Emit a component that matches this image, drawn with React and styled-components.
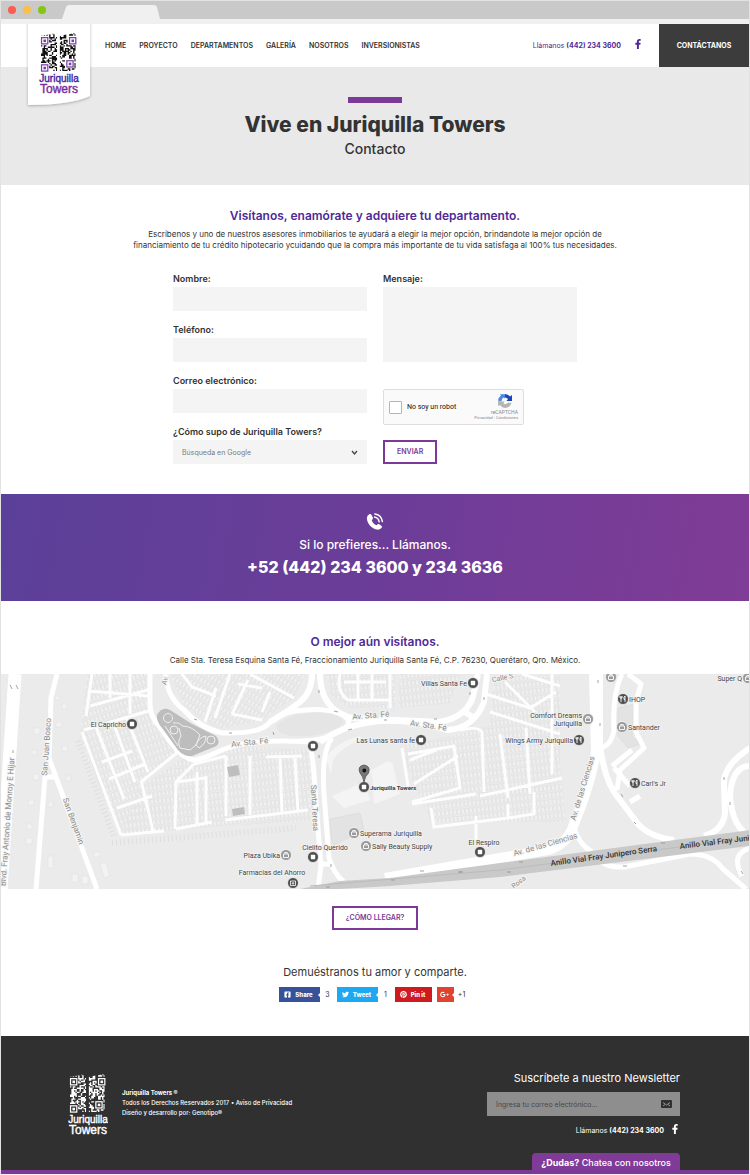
import React from "react";
import styled, { createGlobalStyle } from "styled-components";
import { FaFacebookF, FaTwitter, FaPinterest, FaFacebookSquare, FaGooglePlusG } from "react-icons/fa";

const sans = `Inter, "Open Sans", sans-serif`;
const purple = "#4f2a96";
const violet = "#7b3a97";

const GlobalStyle = createGlobalStyle`
  *, *::before, *::after { box-sizing: border-box; }
  body { margin: 0; background: #fff; font-family: ${sans}; color: #333; }
  h1, h2, p { margin: 0; }
  a { color: inherit; text-decoration: none; }
  button, input, select, textarea { font-family: inherit; margin: 0; border-radius: 0; }
`;

const Browser = styled.div`
  border: 1px solid #e2e2e2;
  border-bottom-color: #f5eef8;
`;

const TitleBar = styled.div`
  display: flex;
  align-items: flex-end;
  height: 18px;
  background: #c9c9c9;
`;

const Lights = styled.div`
  display: flex;
  align-self: center;
  gap: 7px;
  padding: 0 16px 0 7px;
`;

const Light = styled.span`
  width: 8px;
  height: 8px;
  border-radius: 50%;
  background: ${(p) => p.$color};
`;

const Tab = styled.svg`
  display: block;
  width: 100px;
  height: 14px;
`;

const ToolStrip = styled.div`
  height: 5px;
  background: #f0f0f0;
`;

const Header = styled.header`
  position: relative;
  display: flex;
  align-items: stretch;
  height: 43px;
  padding-left: 104px;
  background: #fff;
  font-size: 7px;
  line-height: 10px;
`;

const LogoCard = styled.a`
  position: absolute;
  top: 0;
  left: 24px;
  z-index: 1;
  svg { display: block; }
`;

const Nav = styled.nav`
  display: flex;
  align-items: center;
  gap: 13px;
  font-weight: 600;
`;

const Phone = styled.div`
  display: flex;
  align-items: center;
  gap: 12px;
  margin-left: auto;
  color: ${purple};
  b { font-weight: 700; }
`;

const ContactLink = styled.a`
  display: flex;
  align-items: center;
  justify-content: center;
  width: 90px;
  margin-left: 16px;
  background: #3c3c3c;
  color: #fff;
  font-weight: 700;
`;

const Hero = styled.section`
  display: flex;
  flex-direction: column;
  align-items: center;
  height: 118px;
  padding-top: 30px;
  background: #e9e9e9;
  &::before {
    content: "";
    width: 54px;
    height: 6px;
    background: ${violet};
  }
  h1 { margin-top: 9px; font-size: 21px; line-height: 26px; font-weight: 800; }
  p { margin-top: 1px; font-size: 14px; line-height: 20px; font-weight: 500; }
`;

const Intro = styled.section`
  padding: 22px 16px 0;
  text-align: center;
`;

const Heading = styled.h2`
  color: ${purple};
  font-size: 12px;
  line-height: 18px;
  font-weight: 600;
`;

const Copy = styled.p`
  max-width: 540px;
  margin: 4px auto 0;
  font-size: 8px;
  line-height: 11px;
`;

const Form = styled.form`
  display: grid;
  grid-template-columns: 1fr 1fr;
  column-gap: 16px;
  width: 100%;
  max-width: 404px;
  margin: 21px auto 30px;
`;

const Column = styled.div`
  display: flex;
  flex-direction: column;
  align-items: ${(p) => p.$align || "stretch"};
`;

const Field = styled.label`
  display: flex;
  flex-direction: column;
  align-self: stretch;
  gap: 2px;
  margin-bottom: ${(p) => (p.$last ? 0 : 12)}px;
  font-size: 9px;
  line-height: 13px;
  font-weight: 600;
`;

const TextInput = styled.input`
  width: 100%;
  height: 24px;
  padding: 0 9px;
  border: 0;
  background: #f4f4f4;
  font-size: 8px;
`;

const Message = styled.textarea`
  width: 100%;
  height: 75px;
  padding: 9px;
  border: 0;
  resize: none;
  background: #f4f4f4;
  font-size: 8px;
`;

const SelectBox = styled.span`
  position: relative;
  display: block;
  svg { position: absolute; right: 9px; top: 9px; pointer-events: none; }
`;

const Select = styled.select`
  display: block;
  width: 100%;
  height: 24px;
  padding: 0 24px 0 9px;
  border: 0;
  appearance: none;
  background: #f4f4f4;
  color: #7b7b7b;
  font-size: 7px;
`;

const Captcha = styled.div`
  display: flex;
  align-items: center;
  width: 141px;
  height: 36px;
  margin: 15px 0;
  padding: 0 5px;
  border: 1px solid #dedede;
  border-radius: 2px;
  background: #fafafa;
  font-family: Roboto, sans-serif;
  label { display: flex; align-items: center; gap: 5px; font-size: 7px; color: #111; }
  input {
    appearance: none;
    width: 13px;
    height: 13px;
    border: 1px solid #b5b5b5;
    border-radius: 1px;
    background: #fff;
  }
`;

const CaptchaMark = styled.div`
  display: flex;
  flex-direction: column;
  align-items: flex-end;
  margin-left: auto;
  color: #888;
  font-size: 4px;
  line-height: 6px;
  svg { margin-right: 5px; }
  span { font-size: 5px; }
`;

const OutlineButton = styled.button`
  height: 24px;
  padding: 0 12px;
  border: 2px solid ${violet};
  background: #fff;
  color: ${violet};
  font-size: 7px;
  line-height: 10px;
  font-weight: 600;
`;

const CallBand = styled.section`
  display: flex;
  flex-direction: column;
  align-items: center;
  height: 107px;
  padding-top: 18px;
  background: linear-gradient(100deg, #5b4099 0%, #6b3d98 50%, #803c96 100%);
  color: #fff;
  p { margin-top: 4px; font-size: 12px; line-height: 18px; font-weight: 500; }
  a { margin-top: 2px; font-size: 16px; line-height: 22px; font-weight: 800; }
`;

const Visit = styled.section`
  padding-top: 32px;
  text-align: center;
  ${Copy} { max-width: none; margin: 4px 0 8px; }
`;

const MapView = styled.svg`
  display: block;
  width: 100%;
  height: 215px;
  background: #ebebeb;
  font-family: Roboto, sans-serif;
`;

const Share = styled.section`
  display: flex;
  flex-direction: column;
  align-items: center;
  padding: 17px 0 34px;
  > p { margin: 33px 0 6px; font-size: 11px; line-height: 18px; }
`;

const ShareRow = styled.div`
  display: flex;
`;

const ShareItem = styled.div`
  display: flex;
  align-items: center;
  height: 15px;
  margin-right: ${(p) => p.$gap || 0}px;
  font-size: 7px;
  span { width: 17px; padding-right: 2px; text-align: center; }
`;

const ShareButton = styled.button`
  position: relative;
  display: flex;
  align-items: center;
  justify-content: center;
  gap: 4px;
  width: ${(p) => p.$width}px;
  height: 15px;
  padding: 0 2px 0 0;
  border: 0;
  background: ${(p) => p.$color};
  color: #fff;
  font-size: 6px;
  line-height: 8px;
  font-weight: 800;
  &::after {
    content: "";
    display: ${(p) => (p.$notch ? "block" : "none")};
    position: absolute;
    right: 0;
    top: 6px;
    border: 2px solid transparent;
    border-right-color: #fff;
    border-left: 0;
  }
`;

const Footer = styled.footer`
  position: relative;
  display: flex;
  align-items: flex-start;
  height: 138px;
  padding: 38px 69px 0 67px;
  border-bottom: 4px solid ${violet};
  background: #303030;
  color: #fff;
`;

const Legal = styled.div`
  margin: 14px 0 0 14px;
  font-size: 6px;
  line-height: 10px;
  p { font-weight: 500; }
  b { font-weight: 700; }
`;

const Newsletter = styled.form`
  display: flex;
  flex-direction: column;
  align-items: flex-end;
  width: 193px;
  margin: -5px 0 0 auto;
  > label { margin-bottom: 5px; font-size: 11px; line-height: 18px; }
`;

const EmailBox = styled.div`
  display: flex;
  align-items: center;
  width: 100%;
  height: 24px;
  padding: 0 8px 0 9px;
  background: #8e8e8e;
  input {
    flex: 1;
    min-width: 0;
    padding: 0;
    border: 0;
    background: none;
    color: #fff;
    font-size: 7px;
    &::placeholder { color: #484848; opacity: 1; }
  }
  button { padding: 0; border: 0; background: none; line-height: 0; }
`;

const FooterPhone = styled.div`
  display: flex;
  align-items: center;
  gap: 6px;
  margin-top: 8px;
  font-size: 7px;
  line-height: 10px;
`;

const ChatTab = styled.button`
  position: absolute;
  right: 69px;
  bottom: 0;
  width: 148px;
  height: 17px;
  padding: 0;
  border: 0;
  border-radius: 4px 4px 0 0;
  background: #803b98;
  color: #fff;
  font-size: 9px;
  line-height: 19px;
  font-weight: 500;
`;

function codeModules(cols, rows, seed, finders) {
  const cells = [];
  let s = seed;
  for (let y = 0; y < rows; y++) {
    for (let x = 0; x < cols; x++) {
      s = (s * 16807) % 2147483647;
      const blocked = finders.some(([fx, fy]) => x >= fx - 1 && x <= fx + 5 && y >= fy - 1 && y <= fy + 5);
      if (!blocked && (s >> 8) % 100 < 54) cells.push(`M${x} ${y}h1v1h-1z`);
    }
  }
  return cells.join("");
}

const leftFinders = [[0, 3], [0, 23]];
const rightFinders = [[7, 3], [5, 20]];
const leftCells = codeModules(12, 28, 7151, leftFinders);
const rightCells = codeModules(12, 28, 91377, rightFinders);

function Half({ x, cells, finders, ink, accent, paper, id }) {
  return (
    <g transform={`translate(${x} 0) scale(1.36)`}>
      <clipPath id={id}>
        <path d="M0 2L12 0V28H0z" />
      </clipPath>
      <path d={cells} fill={ink} clipPath={`url(#${id})`} />
      {finders.map(([fx, fy]) => (
        <g key={`${fx}-${fy}`}>
          <rect x={fx + 0.4} y={fy + 0.4} width="4.6" height="4.6" fill={paper} stroke={accent} strokeWidth="0.9" />
          <rect x={fx + 1.8} y={fy + 1.8} width="1.9" height="1.9" fill={accent} />
        </g>
      ))}
    </g>
  );
}

function LogoMark({ ink, accent, paper, text, text2, id }) {
  return (
    <g>
      <g transform="translate(2 0)">
        <Half x={0} cells={leftCells} finders={leftFinders} ink={ink} accent={accent} paper={paper} id={`${id}-left`} />
        <Half x={18.5} cells={rightCells} finders={rightFinders} ink={ink} accent={accent} paper={paper} id={`${id}-right`} />
      </g>
      <g fontFamily="Liberation Sans, sans-serif" textAnchor="middle" strokeWidth="0.4">
        <text x="20" y="49" fontSize="10" fill={text} stroke={text}>Juriquilla</text>
        <text x="20" y="60" fontSize="12" fill={text2} stroke={text2}>Towers</text>
      </g>
    </g>
  );
}

const places = [
  ["El Capricho", 132, 50, "end"],
  ["Villas Santa Fe", 473, 9, "end"],
  ["Las Lunas santa fe", 421, 66, "end"],
  ["", 313, 72, "end"],
  ["Juriquilla Towers", 364, 113, "start", "bold"],
  ["Superama Juriquilla", 354, 159, "start", "shop"],
  ["Sally Beauty Supply", 366, 172, "start", "shop"],
  ["Plaza Ubika", 286, 181, "end", "shop"],
  ["Wings Army Juriquilla", 579, 66, "end", "food"],
  ["IHOP", 623, 25, "start", "food"],
  ["Santander", 622, 53, "start", "shop"],
  ["Carl's Jr", 635, 109, "start", "food"],
  ["Super Q", 748, 4, "end", "shop"],
  ["", 611, 3, "end", "shop"],
  ["", 588, 45, "end", "shop"],
  ["", 313, 183, "end"],
  ["", 293, 209, "end", "cross"],
  ["", 480, 178, "end"],
];

const placeCaptions = [
  ["Comfort Dreams", 582, 44, "end"],
  ["Juriquilla", 582, 52, "end"],
  ["Cielito Querido", 325, 176, "middle"],
  ["Farmacias del Ahorro", 272, 201, "middle"],
  ["El Respiro", 484, 171, "middle"],
];

const streets = [
  ["Av. Sta. Fé", 371, 44, -5, 8],
  ["Av. Sta. Fé", 428, 54, 8, 8],
  ["Av. Sta. Fé", 250, 71, -6, 8],
  ["Av. S", 168, 4, -75, 7],
  ["San Juan Bosco", 49, 73, -86, 8],
  ["San Benjamin", 71, 148, 70, 8],
  ["Blvd. Fray Antonio de Monroy E Hijar", 10, 148, -86, 8],
  ["Santa Teresa", 312, 134, 87, 8],
  ["Av. de las Ciencias", 585, 115, -73, 8],
  ["Av. de las Ciencias", 546, 173, -16, 8],
  ["Rosa", 520, 210, -38, 7],
  ["Calle S", 503, 6, -12, 7],
];

const blocks = [
  ["M87 0H146L149 32 178 76 141 106 154 136 117 158 80 64z", "a"],
  ["M142 112L180 86 218 76 236 72 312 76 313 146 160 157 118 163z", "b"],
  ["M170 0H306L292 26 262 46 218 55 184 32z", "c"],
  ["M326 0H395V34H350L332 22z", "b"],
  ["M400 0H460L450 30 398 34z", "b"],
  ["M494 2H560V90L566 148 430 148 402 80 404 72 460 60 490 50z", "b"],
];

const lanes = [
  "M92 0L86 42M90 32L148 16M88 17L149 22M110 0V24M130 0V40M84 56L152 36M82 58L121 161M96 53L124 125M113 48L135 108M127 45L148 98M102 88L132 77M109 105L145 90M117 134L152 122M141 108L178 78M141 106L153 157M121 161L164 157M176 155L212 148M225 146L308 136",
  "M175 155L176 108L194 90M176 108L206 104M197 98V152M206 102V150M194 90L226 82M226 82V142M250 82V141M266 83L302 82M280 82L282 140M295 84L298 138",
  "M182 0L192 13 216 22M216 14L205 48M230 0L215 44M232 40L248 6M232 40L262 46M250 0L294 24M270 18L262 38M238 10L262 14M340 0Q336 18 348 26H390M344 8H386M358 0V26M372 0V26M390 0V34",
  "M402 74L408 112M408 80L454 72 460 114 412 128M410 86L436 76M414 110L458 82M460 56Q478 52 482 58L484 118M490 38L560 60M486 20L530 34 556 18M505 8L535 38M522 0L560 12M552 0V100M500 60L508 124M526 54L530 120M480 122L562 104M412 130L476 120M431 134L434 153 508 144 534 140V118M476 142V166M508 130V144",
];

const roads = [
  ["M15 0L1 215", 13],
  ["M57 0L51 24 49 84 97 215M55 103H45L36 215", 5],
  ["M150 0V30Q150 40 156 48L172 70Q182 84 194 86Q206 84 222 76Q250 64 310 68", 5],
  ["M166 0Q166 22 184 36Q200 54 222 59Q262 60 270 48Q285 36 306 36Q330 34 344 42Q356 50 338 58Q324 67 300 67", 5],
  ["M312 0Q312 18 300 28Q290 36 270 48M320 0Q320 24 335 36Q344 42 352 44L440 48Q470 42 474 18L478 0", 6],
  ["M320 68Q345 50 380 47Q410 45 448 56Q474 54 484 28L487 0M462 36L474 44", 6],
  ["M310 69Q314 90 316 130L321 192 318 215M332 64Q321 78 324 120L329 184Q334 200 344 208M321 190H330", 5],
  ["M594 0L596 78Q590 112 574 150Q568 170 548 176L500 184 385 204", 10],
  ["M600 0V70Q604 108 620 126L638 150Q650 163 674 166", 6],
  ["M573 150Q578 170 592 178M622 0Q612 20 614 56Q612 70 602 74M628 0L641 10 636 28V58L644 74 620 96 617 116M612 92L632 76M614 94L630 112M630 128L640 122", 5],
  ["M750 74Q722 92 724 112L725 138Q724 156 704 162M750 92Q732 92 730 122Q732 148 744 158", 6],
  ["M598 186Q608 194 624 193L690 180Q712 180 722 194L746 215M750 174Q730 180 742 202", 5],
];

const arrows = "M10 11l2 4M16 11l2 4M13 76v3M194 45l3 1M229 59h3M273 58l1 3M319 16v3M334 37l4 1M348 56l4-1M384 46h3M434 45h3M470 21v-3M484 26v-3M319 84v-3M331 190v3M598 6v3M600 52v-3M621 120l2 3M634 148l2 2M724 106v-3M730 128v3M741 197l2 3M623 192h4M424 197h-4M462 198h-4M395 206h-4M330 213h-4M523 188h-4M507 198h4M459 198h4M665 169h-4";

function PlacePin({ x, y, kind }) {
  const tone = kind === "shop" ? "#999" : "#505050";
  return (
    <g>
      <circle cx={x} cy={y} r="5.5" fill={tone} stroke="#fff" strokeWidth="0.7" />
      {kind === "food" ? (
        <path d={`M${x - 2} ${y - 3}v6M${x - 3} ${y - 3}v2h2v-2M${x + 2} ${y + 3}v-6q-1.5 1-1 3.5h1`} stroke="#fff" fill="none" strokeWidth="0.9" />
      ) : kind === "shop" ? (
        <path d={`M${x - 2.5} ${y - 1}h5v3.5h-5zM${x - 1.3} ${y - 1}v-1.5h2.6v1.5`} stroke="#fff" fill="none" strokeWidth="0.9" />
      ) : kind === "cross" ? (
        <path d={`M${x - 2.5} ${y - 2}h5v4.5h-5zM${x} ${y - 1}v2.6M${x - 1.2} ${y + 0.3}h2.4`} stroke="#fff" fill="none" strokeWidth="0.8" />
      ) : (
        <rect x={x - 2.2} y={y - 2.2} width="4.4" height="4.4" rx="0.6" fill="#fff" />
      )}
    </g>
  );
}

function StreetMap() {
  return (
    <MapView viewBox="1 0 748 215" preserveAspectRatio="xMidYMid slice" role="img" aria-label="Mapa de Juriquilla Towers">
      <defs>
        {[["a", -18], ["b", -6], ["c", 32]].map(([id, angle]) => (
          <pattern key={id} id={`lots-${id}`} width="4" height="7" patternUnits="userSpaceOnUse" patternTransform={`rotate(${angle})`}>
            <rect x="0.5" y="0.5" width="2.8" height="5" fill="#f0f0f0" stroke="#dfdfdf" strokeWidth="0.6" />
          </pattern>
        ))}
      </defs>
      <rect x="0" width="750" height="215" fill="#ebebeb" />
      {blocks.map(([d, id]) => <path key={d} d={d} fill={`url(#lots-${id})`} />)}
      <path d="M82 62L118 158M116 164L300 149" stroke="#dedede" strokeWidth="6" strokeDasharray="1 3" transform="translate(-4 5)" />
      <path d="M55 22h5v4h-5zM62 30h5v5h-5zM56 48h6v5h-6zM34 54h6v6h-6zM32 76h5v5h-5zM62 72h6v5h-6zM33 100h6v6h-6zM66 102h5v5h-5zM28 126h6v5h-6zM48 128h5v5h-5zM27 150h5v5h-5zM26 164h6v6h-6zM48 182h5v12h-5zM72 200h6v8h-6zM82 202h6v8h-6zM94 178h6v5h-6zM100 190l6-2 4 14-6 2z" fill="#f2f2f2" stroke="#dedede" strokeWidth="0.5" />
      <path d="M331 100L326 84Q336 68 360 62L362 66Q342 72 333 86zM370 97L388 87 392 90 372 102zM332 122L364 108 370 126 344 134zM372 98L392 88 400 120 374 130z" fill="#f4f4f4" />
      <path d="M330 145L360 139 364 156 332 172zM618 34L634 30 632 62 640 70 628 74 618 62z" fill="#e3e3e3" stroke="#dadada" strokeWidth="0.7" />
      <path d={lanes.join("")} fill="none" stroke="#fff" strokeWidth="3" opacity="0.9" />
      {roads.map(([d, width]) => <path key={d} d={d} fill="none" stroke="#fff" strokeWidth={width} strokeLinejoin="round" />)}
      <path d="M276 52Q286 41 308 39Q332 37 342 44Q346 52 330 57Q310 65 286 61Q277 58 276 52z" fill="#e5e5e5" />
      <path d="M157 41Q162 32 170 36L192 50Q200 54 216 62Q222 70 214 73L192 82Q184 83 178 76L162 54Q156 47 157 41z" fill="#bdbdbd" />
      <g fill="none" stroke="#efefef" strokeWidth="1">
        <circle cx="168" cy="44" r="4.5" /><circle cx="174" cy="56" r="4" /><circle cx="211" cy="66" r="4" />
        <path d="M173 49Q180 48 182 52Q192 52 200 61L196 71 190 76 180 74Q177 68 181 62L179 54M196 71Q199 63 206 62Q206 70 199 74zM165 52L178 72" />
      </g>
      <path d="M227 93L238 91 240 101 229 103zM232 135L244 133 245 140 233 142z" fill="#bebebe" />
      <path d="M300 215L340 207 390 204 500 189 750 156V172L500 203 390 212 340 215z" fill="#c9c9c9" />
      <path d="M310 212L500 196 750 164" fill="none" stroke="#bcbcbc" strokeWidth="1" />
      <path d={arrows} stroke="#999" strokeWidth="0.9" fill="none" />
      <g fill="#8a8a8a" textAnchor="middle" stroke="#f5f5f5" strokeWidth="2" paintOrder="stroke">
        {streets.map(([name, x, y, angle, size]) => (
          <text key={`${name}${x}`} fontSize={size} transform={`translate(${x} ${y}) rotate(${angle})`}>{name}</text>
        ))}
      </g>
      <g fill="#333" fontSize="8" fontWeight="500">
        <text transform="translate(551 192) rotate(-8)">Anillo Vial Fray Junipero Serra</text>
        <text transform="translate(680 175) rotate(-7)">Anillo Vial Fray Junipero Serra</text>
      </g>
      {places.map(([name, x, y, side, kind]) => <PlacePin key={`${x}-${y}`} x={x} y={y} kind={kind} />)}
      <g fill="#444" fontSize="7" stroke="#f3f3f3" strokeWidth="1.5" paintOrder="stroke">
        {places.filter(([name]) => name).map(([name, x, y, side, kind]) => (
          <text key={name} x={side === "end" ? x - 6 : x + 6} y={y + 3} textAnchor={side} fontWeight={kind === "bold" ? 800 : 400} fontSize={kind === "bold" ? 6 : 7}>{name}</text>
        ))}
        {placeCaptions.map(([name, x, y, side]) => <text key={name} x={x} y={y} textAnchor={side}>{name}</text>)}
      </g>
      <path d="M364 108Q363 102 360 99Q357 92 364 91Q371 92 368.500 99Q365 102 364 108z" fill="#777" stroke="#444" strokeWidth="0.7" />
      <circle cx="364.300" cy="96.500" r="1.900" fill="#111" />
    </MapView>
  );
}

function CallIcon() {
  return (
    <svg width="18" height="20" viewBox="0 0 18 20" aria-hidden="true">
      <path d="M3 2.500C1 3.500 0.500 6 1.200 8.500C2.500 13 6.500 16.800 11 17.600C13 17.900 15 17 15.900 15.200C16.200 14.600 16 14.200 15.600 13.900L13 12.100C12.500 11.800 12 11.900 11.600 12.300L10.600 13.300C8.300 12.500 6.300 10.300 5.700 8.300L6.700 7C7 6.600 7.100 6.200 6.900 5.700L5.400 2.700C5 1.900 4 2 3 2.500z" fill="#fff" />
      <path d="M8.600 5.100Q12.300 5.800 13.200 9.800M8.800 1.900Q15.300 2.600 16.400 9.600" fill="none" stroke="#fff" strokeWidth="1.500" strokeLinecap="round" />
    </svg>
  );
}

function CaptchaIcon() {
  return (
    <svg width="16" height="16" viewBox="0 0 16 16" aria-hidden="true">
      <path d="M1 8A7 7 0 0 1 4 2.500L2.800 1.200H8V5.500L6.500 4.600A4 4 0 0 0 4.500 8z" fill="#4a88e8" />
      <path d="M8 1A7 7 0 0 1 13 3.500L15 2V8H9.500L11 6Q10 4.500 8 4.500z" fill="#1c45b8" />
      <path d="M1 7V13L3 12Q5 15 8.500 15Q13 14.500 14.500 10L11 9.500Q9 12 6.500 10.500L7.500 8.500Q3 8.500 1 7z" fill="#b5b5b5" />
    </svg>
  );
}

export default function App() {
  return (
    <Browser>
      <GlobalStyle />
      <TitleBar>
        <Lights>
          <Light $color="#fb5b50" />
          <Light $color="#fcc04a" />
          <Light $color="#82c812" />
        </Lights>
        <Tab viewBox="0 0 100 14" aria-hidden="true">
          <path d="M0 14L4 2Q5 0 7 0H92Q94 0 95 2L98 14z" fill="#f0f0f0" />
        </Tab>
      </TitleBar>
      <ToolStrip />
      <Header>
        <LogoCard href="#" aria-label="Juriquilla Towers">
          <svg width="70" height="88" viewBox="0 0 70 88">
            <defs>
              <filter id="cardShadow" x="-20%" y="-10%" width="140%" height="125%">
                <feDropShadow dx="0" dy="1" stdDeviation="1.500" floodOpacity="0.28" />
              </filter>
            </defs>
            <path d="M3 -6H65V72Q45 81 3 81z" fill="#fff" filter="url(#cardShadow)" />
            <g transform="translate(14 9)">
              <LogoMark id="header" ink="#111" accent="#7a3fa8" paper="#fff" text="#43289b" text2="#7a2b9e" />
            </g>
          </svg>
        </LogoCard>
        <Nav>
          <a href="#">HOME</a>
          <a href="#">PROYECTO</a>
          <a href="#">DEPARTAMENTOS</a>
          <a href="#">GALERÍA</a>
          <a href="#">NOSOTROS</a>
          <a href="#">INVERSIONISTAS</a>
        </Nav>
        <Phone>
          <a href="#">Llámanos <b>(442) 234 3600</b></a>
          <a href="#" aria-label="Facebook"><FaFacebookF size={10} /></a>
        </Phone>
        <ContactLink href="#">CONTÁCTANOS</ContactLink>
      </Header>

      <Hero>
        <h1>Vive en Juriquilla Towers</h1>
        <p>Contacto</p>
      </Hero>

      <Intro>
        <Heading>Visítanos, enamórate y adquiere tu departamento.</Heading>
        <Copy>
          Escríbenos y uno de nuestros asesores inmobiliarios te ayudará a elegir la mejor opción, brindandote la mejor opción de
          <br />
          financiamiento de tu crédito hipotecario ycuidando que la compra más importante de tu vida satisfaga al 100% tus necesidades.
        </Copy>
      </Intro>

      <Form>
        <Column>
          <Field>Nombre:<TextInput type="text" /></Field>
          <Field>Teléfono:<TextInput type="tel" /></Field>
          <Field>Correo electrónico:<TextInput type="email" /></Field>
          <Field $last>
            ¿Cómo supo de Juriquilla Towers?
            <SelectBox>
              <Select defaultValue="google">
                <option value="google">Búsqueda en Google</option>
              </Select>
              <svg width="7" height="7" viewBox="0 0 7 7" aria-hidden="true">
                <path d="M1 2L3.500 5 6 2" fill="none" stroke="#444" strokeWidth="1.300" />
              </svg>
            </SelectBox>
          </Field>
        </Column>
        <Column $align="flex-start">
          <Field>Mensaje:<Message /></Field>
          <Captcha>
            <label><input type="checkbox" />No soy un robot</label>
            <CaptchaMark>
              <CaptchaIcon />
              <span>reCAPTCHA</span>
              Privacidad - Condiciones
            </CaptchaMark>
          </Captcha>
          <OutlineButton type="button">ENVIAR</OutlineButton>
        </Column>
      </Form>

      <CallBand>
        <CallIcon />
        <p>Si lo prefieres... Llámanos.</p>
        <a href="#">+52 (442) 234 3600 y 234 3636</a>
      </CallBand>

      <Visit>
        <Heading>O mejor aún visítanos.</Heading>
        <Copy>Calle Sta. Teresa Esquina Santa Fé, Fraccionamiento Juriquilla Santa Fé, C.P. 76230, Querétaro, Qro. México.</Copy>
        <StreetMap />
      </Visit>

      <Share>
        <OutlineButton type="button">¿CÓMO LLEGAR?</OutlineButton>
        <p>Demuéstranos tu amor y comparte.</p>
        <ShareRow>
          <ShareItem>
            <ShareButton $width={41} $color="#35529b" $notch><FaFacebookSquare size={7} />Share</ShareButton>
            <span>3</span>
          </ShareItem>
          <ShareItem>
            <ShareButton $width={41} $color="#1da9f2" $notch><FaTwitter size={7} />Tweet</ShareButton>
            <span>1</span>
          </ShareItem>
          <ShareItem $gap={5}>
            <ShareButton $width={37} $color="#cf1a20"><FaPinterest size={7} />Pin it</ShareButton>
          </ShareItem>
          <ShareItem>
            <ShareButton $width={17} $color="#e0432f" $notch aria-label="Google Plus"><FaGooglePlusG size={9} /></ShareButton>
            <span>+1</span>
          </ShareItem>
        </ShareRow>
      </Share>

      <Footer>
        <svg width="40" height="62" viewBox="0 0 40 62" role="img" aria-label="Juriquilla Towers">
          <LogoMark id="footer" ink="#fff" accent="#fff" paper="#303030" text="#fff" text2="#fff" />
        </svg>
        <Legal>
          <p><b>Juriquilla Towers ®</b></p>
          <p>Todos los Derechos Reservados 2017 • <a href="#">Aviso de Privacidad</a></p>
          <p>Diseño y desarrollo por: Genotipo®</p>
        </Legal>
        <Newsletter>
          <label htmlFor="newsletter">Suscríbete a nuestro Newsletter</label>
          <EmailBox>
            <input id="newsletter" type="email" placeholder="Ingresa tu correo electrónico..." />
            <button type="button" aria-label="Suscribirse">
              <svg width="11" height="8" viewBox="0 0 11 8">
                <rect width="11" height="8" rx="1" fill="#303030" />
                <path d="M2 2.500L5.500 5 9 2.500M2 6L4 4.500M9 6L7 4.500" fill="none" stroke="#aaa" strokeWidth="0.800" />
              </svg>
            </button>
          </EmailBox>
          <FooterPhone>
            <a href="#">Llámanos <b>(442) 234 3600</b></a>
            <a href="#" aria-label="Facebook"><FaFacebookF size={10} /></a>
          </FooterPhone>
        </Newsletter>
        <ChatTab type="button"><b>¿Dudas?</b> Chatea con nosotros</ChatTab>
      </Footer>
    </Browser>
  );
}
